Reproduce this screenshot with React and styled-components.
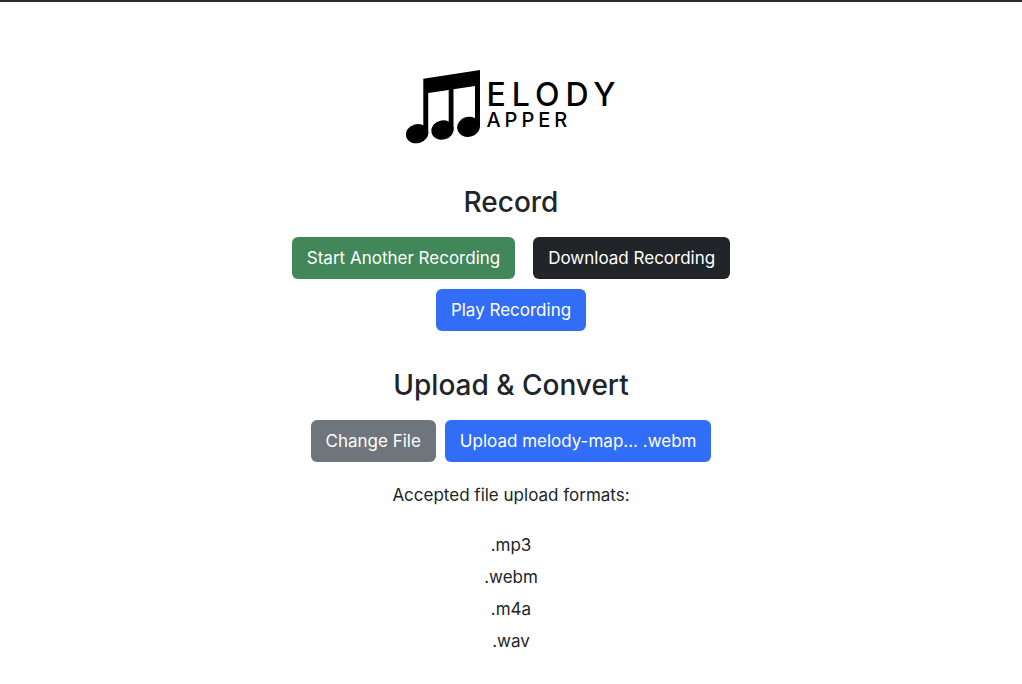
import React from 'react';
import styled, { createGlobalStyle } from 'styled-components';

const GlobalStyle = createGlobalStyle`
  *, *::before, *::after { box-sizing: border-box; }
  body {
    margin: 0;
    background: #fff;
    color: #212529;
    font-family: Inter, "Liberation Sans", sans-serif;
    font-size: 17px;
    line-height: 26px;
    border-top: 2px solid #2f2b2d;
  }
`;

const Page = styled.main`
  display: flex;
  flex-direction: column;
  align-items: center;
  padding: 68px 16px 24px;
  text-align: center;
`;

const Logo = styled.h1`
  display: flex;
  align-items: flex-start;
  gap: 4px;
  margin: 0 0 39px;
  color: #000;
  font-weight: 500;
  text-align: left;
`;

const Notes = styled.svg`
  display: block;
  width: 76px;
  height: 76px;
`;

const Wordmark = styled.span`
  display: flex;
  flex-direction: column;
  padding-top: 8px;
  margin-right: -6px;
`;

const Word = styled.span`
  font-size: ${(p) => (p.$large ? 32 : 20)}px;
  line-height: ${(p) => (p.$large ? 34 : 17)}px;
  letter-spacing: ${(p) => (p.$large ? 6 : 4)}px;
`;

const Section = styled.section`
  width: 100%;
  max-width: 460px;
  margin-bottom: ${(p) => p.$space || 0}px;
`;

const Heading = styled.h2`
  margin: 0 0 18px;
  font-size: 28px;
  line-height: 34px;
  font-weight: 500;
`;

const Actions = styled.div`
  display: flex;
  flex-wrap: wrap;
  justify-content: center;
  gap: 10px ${(p) => p.$gap}px;
`;

const tones = {
  success: '#41875a',
  dark: '#212529',
  primary: '#316df6',
  secondary: '#6e757c',
};

const Button = styled.button`
  padding: 8px 15px;
  border: 0;
  border-radius: 6px;
  background: ${(p) => tones[p.$tone]};
  color: #fff;
  font: inherit;
  cursor: pointer;
`;

const Note = styled.p`
  margin: 20px 0 0;
`;

const Formats = styled.ul`
  margin: 21px 0 0;
  padding: 0;
  list-style: none;
  line-height: 32px;
`;

const formats = ['.mp3', '.webm', '.m4a', '.wav'];

export default function App() {
  return (
    <>
      <GlobalStyle />
      <Page>
        <Logo>
          <Notes viewBox="0 0 76 76" aria-hidden="true">
            <path d="M17.300 8.700 74 0V57H69V16L47.500 19.200V60H42.700V19.900L22.200 23V64H17.300Z" />
            <ellipse cx="11.100" cy="63.700" rx="11.300" ry="9.500" transform="rotate(-14 11.100 63.700)" />
            <ellipse cx="36.500" cy="60" rx="11.300" ry="9.600" transform="rotate(-14 36.500 60)" />
            <ellipse cx="62.600" cy="56.800" rx="11.500" ry="10" transform="rotate(-14 62.600 56.800)" />
          </Notes>
          <Wordmark>
            <Word $large>ELODY</Word>
            <Word>APPER</Word>
          </Wordmark>
        </Logo>

        <Section $space={37}>
          <Heading>Record</Heading>
          <Actions $gap={18}>
            <Button type="button" $tone="success">Start Another Recording</Button>
            <Button type="button" $tone="dark">Download Recording</Button>
            <Button type="button" $tone="primary">Play Recording</Button>
          </Actions>
        </Section>

        <Section>
          <Heading>Upload &amp; Convert</Heading>
          <Actions $gap={9}>
            <Button type="button" $tone="secondary">Change File</Button>
            <Button type="button" $tone="primary">Upload melody-map... .webm</Button>
          </Actions>
          <Note>Accepted file upload formats:</Note>
          <Formats>
            {formats.map((format) => (
              <li key={format}>{format}</li>
            ))}
          </Formats>
        </Section>
      </Page>
    </>
  );
}
